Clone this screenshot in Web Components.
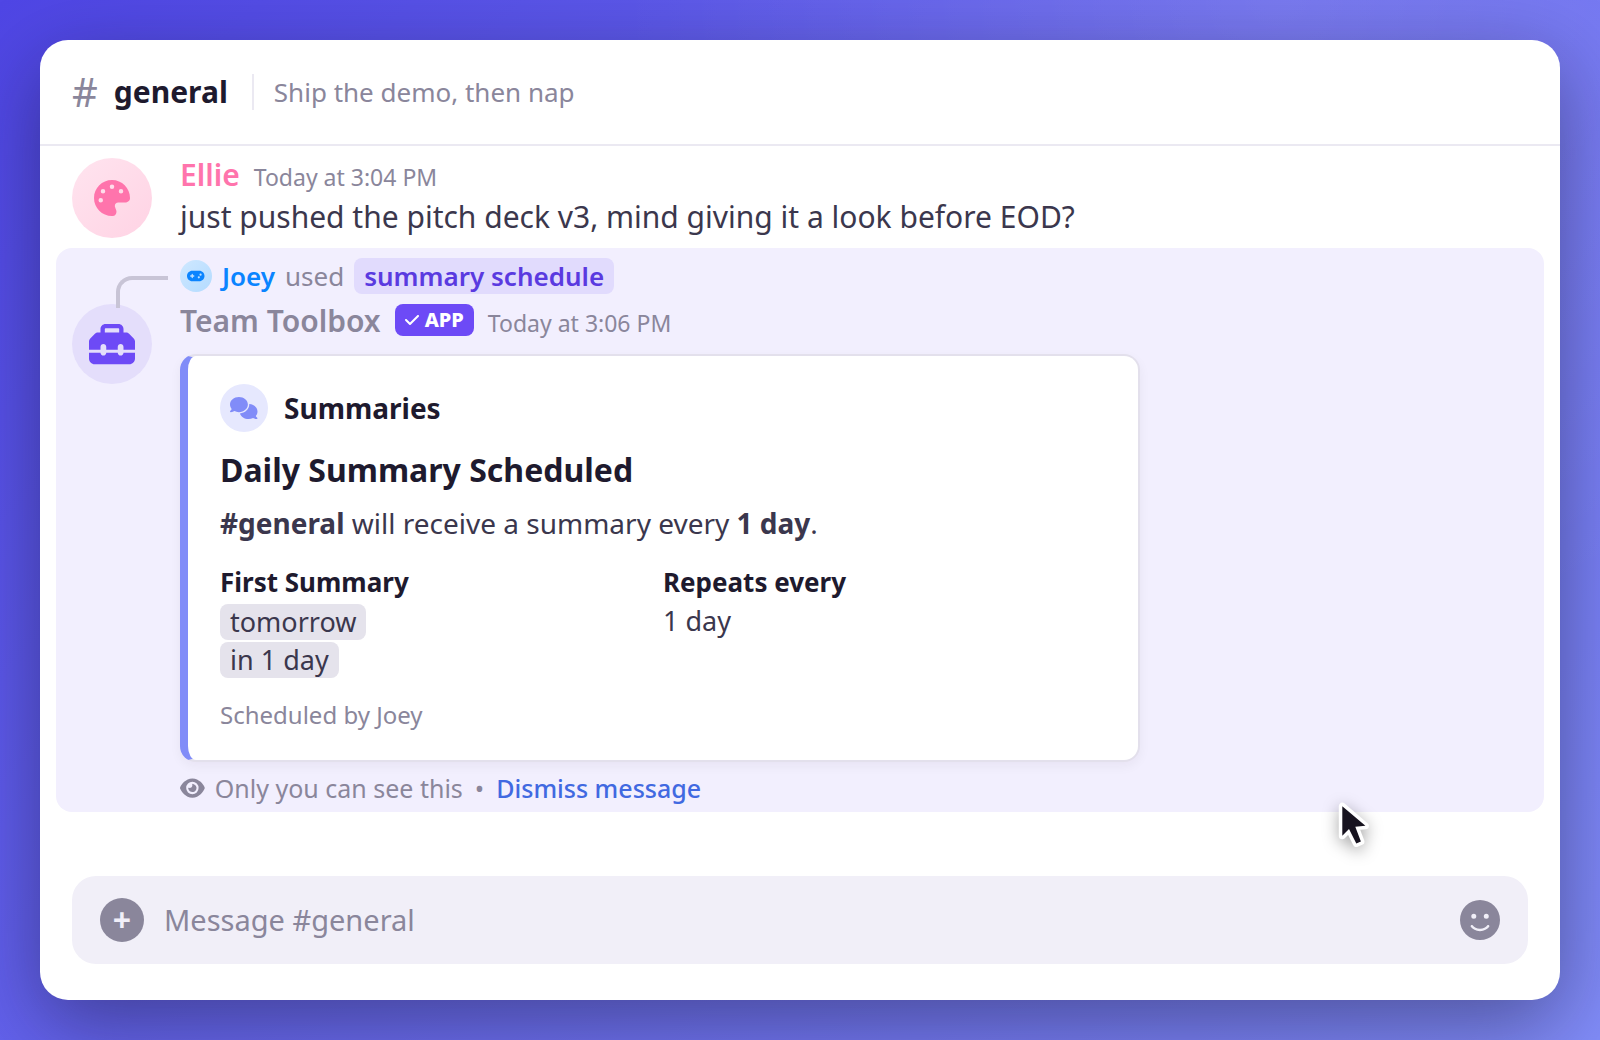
<!DOCTYPE html>
<html lang="en">
<head>
<meta charset="UTF-8">
<meta name="viewport" content="width=device-width, initial-scale=1">
<title>#general</title>
<style>
    :root {
        --ink: #1e1a2e;
        --text: #3b374d;
        --muted: #8a869b;
        --line: #ebe9f2;
        --accent: #6d4af6;
    }
    * {
        box-sizing: border-box;
    }
    body {
        margin: 0;
        min-height: 100vh;
        padding: 40px;
        display: flex;
        font-family: "Noto Sans", "Open Sans", sans-serif;
        color: var(--text);
        background:
            radial-gradient(circle at 80% 0%, rgba(255, 255, 255, 0.12), transparent 40%),
            linear-gradient(135deg, #4f46e5, #818cf8);
    }
</style>
</head>
<body>
    <chat-window>
        <channel-header slot="header" name="general" topic="Ship the demo, then nap"></channel-header>

        <chat-message author="Ellie" time="Today at 3:04 PM" icon="palette" theme="pink">
            <message-text>just pushed the pitch deck v3, mind giving it a look before EOD?</message-text>
        </chat-message>

        <chat-message author="Team Toolbox" time="Today at 3:06 PM" icon="toolbox" theme="app" app highlighted>
            <command-reply slot="reply" user="Joey" command="summary schedule"></command-reply>
            <app-embed icon="comments" category="Summaries" heading="Daily Summary Scheduled">
                <span slot="description"><b>#general</b> will receive a summary every <b>1 day</b>.</span>
                <embed-field label="First Summary">
                    <time-chip>tomorrow</time-chip>
                    <time-chip>in 1 day</time-chip>
                </embed-field>
                <embed-field label="Repeats every">1 day</embed-field>
                <span slot="footer">Scheduled by Joey</span>
            </app-embed>
            <ephemeral-note></ephemeral-note>
        </chat-message>

        <message-composer slot="composer" channel="general"></message-composer>
    </chat-window>
    <mouse-pointer></mouse-pointer>

<script>
const ICONS = {
    palette: ['0 0 512 512', 'M512 256c0 .9 0 1.8 0 2.7c-.4 36.5-33.6 61.3-70.1 61.3L344 320c-26.5 0-48 21.5-48 48c0 3.4 .4 6.7 1 9.9c2.1 10.2 6.5 20 10.8 29.9c6.1 13.8 12.1 27.5 12.1 42c0 31.8-21.6 60.7-53.4 62c-3.5 .1-7 .2-10.6 .2C114.6 512 0 397.4 0 256S114.6 0 256 0S512 114.6 512 256zM128 288a32 32 0 1 0 -64 0 32 32 0 1 0 64 0zm0-96a32 32 0 1 0 0-64 32 32 0 1 0 0 64zM288 96a32 32 0 1 0 -64 0 32 32 0 1 0 64 0zm96 96a32 32 0 1 0 0-64 32 32 0 1 0 0 64z'],
    toolbox: ['0 0 512 512', 'M176 88l0 40 160 0 0-40c0-4.4-3.6-8-8-8L184 80c-4.4 0-8 3.6-8 8zm-48 40l0-40c0-30.9 25.1-56 56-56l144 0c30.9 0 56 25.1 56 56l0 40 28.1 0c12.7 0 24.9 5.1 33.9 14.1l51.9 51.9c9 9 14.1 21.2 14.1 33.9l0 92.1-128 0 0-32c0-17.7-14.3-32-32-32s-32 14.3-32 32l0 32-128 0 0-32c0-17.7-14.3-32-32-32s-32 14.3-32 32l0 32L0 320l0-92.1c0-12.7 5.1-24.9 14.1-33.9l51.9-51.9c9-9 21.2-14.1 33.9-14.1l28.1 0zM0 416l0-64 128 0c0 17.7 14.3 32 32 32s32-14.3 32-32l128 0c0 17.7 14.3 32 32 32s32-14.3 32-32l128 0 0 64c0 35.3-28.7 64-64 64L64 480c-35.3 0-64-28.7-64-64z'],
    gamepad: ['0 0 640 512', 'M192 64C86 64 0 150 0 256S86 448 192 448l256 0c106 0 192-86 192-192s-86-192-192-192L192 64zM496 168a40 40 0 1 1 0 80 40 40 0 1 1 0-80zM392 304a40 40 0 1 1 80 0 40 40 0 1 1 -80 0zM168 200c0-13.3 10.7-24 24-24s24 10.7 24 24l0 32 32 0c13.3 0 24 10.7 24 24s-10.7 24-24 24l-32 0 0 32c0 13.3-10.7 24-24 24s-24-10.7-24-24l0-32-32 0c-13.3 0-24-10.7-24-24s10.7-24 24-24l32 0 0-32z'],
    comments: ['0 0 640 512', 'M208 352c114.9 0 208-78.8 208-176S322.9 0 208 0S0 78.8 0 176c0 38.6 14.7 74.3 39.6 103.4c-3.5 9.4-8.7 17.7-14.2 24.7c-4.8 6.2-9.7 11-13.3 14.3c-1.8 1.6-3.3 2.9-4.3 3.7c-.5 .4-.9 .7-1.1 .8l-.2 .2C1 327.2-1.4 334.4 .8 340.9S9.1 352 16 352c21.8 0 43.8-5.6 62.1-12.5c9.2-3.5 17.8-7.4 25.2-11.4C134.1 343.3 169.8 352 208 352zM448 176c0 112.3-99.1 196.9-216.5 207C255.8 457.4 336.4 512 432 512c38.2 0 73.9-8.7 104.7-23.9c7.5 4 16 7.9 25.2 11.4c18.3 6.9 40.3 12.5 62.1 12.5c6.9 0 13.1-4.5 15.2-11.1c2.1-6.6-.2-13.8-5.8-17.9l-.2-.2c-.2-.2-.6-.4-1.1-.8c-1-.8-2.5-2-4.3-3.7c-3.6-3.3-8.5-8.1-13.3-14.3c-5.5-7-10.7-15.4-14.2-24.7c24.9-29 39.6-64.7 39.6-103.4c0-92.8-84.9-168.9-192.6-175.5c.4 5.1 .6 10.3 .6 15.5z'],
    eye: ['0 0 576 512', 'M288 32c-80.8 0-145.5 36.8-192.6 80.6C48.6 156 17.3 208 2.5 243.7c-3.3 7.9-3.3 16.7 0 24.6C17.3 304 48.6 356 95.4 399.4C142.5 443.2 207.2 480 288 480s145.5-36.8 192.6-80.6c46.8-43.5 78.1-95.4 93-131.1c3.3-7.9 3.3-16.7 0-24.6c-14.9-35.7-46.2-87.7-93-131.1C433.5 68.8 368.8 32 288 32zM144 256a144 144 0 1 1 288 0 144 144 0 1 1 -288 0zm144-64c0 35.3-28.7 64-64 64c-7.1 0-13.9-1.2-20.3-3.3c-5.5-1.8-11.9 1.6-11.7 7.4c.3 6.9 1.3 13.8 3.2 20.7c13.7 51.2 66.4 81.6 117.6 67.9s81.6-66.4 67.9-117.6c-11.1-41.5-47.8-69.4-88.6-71.1c-5.8-.2-9.2 6.1-7.4 11.7c2.1 6.4 3.3 13.2 3.3 20.3z'],
    check: ['0 0 448 512', 'M438.6 105.4c12.5 12.5 12.5 32.8 0 45.3l-256 256c-12.5 12.5-32.8 12.5-45.3 0l-128-128c-12.5-12.5-12.5-32.8 0-45.3s32.8-12.5 45.3 0L160 338.7 393.4 105.4c12.5-12.5 32.8-12.5 45.3 0z'],
    smile: ['0 0 512 512', 'M256 512A256 256 0 1 0 256 0a256 256 0 1 0 0 512zM164.1 325.5C182 346.2 212.6 368 256 368s74-21.8 91.9-42.5c5.8-6.7 15.9-7.4 22.6-1.6s7.4 15.9 1.6 22.6C349.8 372.1 311.1 400 256 400s-93.8-27.9-116.1-53.5c-5.8-6.7-5.1-16.8 1.6-22.6s16.8-5.1 22.6 1.6zM144.4 208a32 32 0 1 1 64 0 32 32 0 1 1 -64 0zm192-32a32 32 0 1 1 0 64 32 32 0 1 1 0-64z']
};

// height follows font-size, width follows the viewBox
class UiIcon extends HTMLElement {
    constructor() {
        super();
        this.attachShadow({ mode: 'open' });
    }

    connectedCallback() {
        const [box, path] = ICONS[this.getAttribute('name')];
        this.shadowRoot.innerHTML = `
            <style>
                :host {
                    display: inline-flex;
                    flex: none;
                }
                svg {
                    display: block;
                    height: 1em;
                    fill: currentColor;
                }
            </style>
            <svg viewBox="${box}" aria-hidden="true"><path d="${path}"/></svg>
        `;
    }
}

class ChatWindow extends HTMLElement {
    constructor() {
        super();
        this.attachShadow({ mode: 'open' });
    }

    connectedCallback() {
        this.shadowRoot.innerHTML = `
            <style>
                :host {
                    flex: 1;
                    min-width: 0;
                    display: flex;
                    flex-direction: column;
                    background: #fff;
                    border-radius: 28px;
                    box-shadow: 0 24px 80px rgba(15, 12, 30, 0.42);
                }
                main {
                    flex: 1;
                    display: flex;
                    flex-direction: column;
                    gap: 2px;
                    padding: 4px 16px;
                }
            </style>
            <slot name="header"></slot>
            <main><slot></slot></main>
            <slot name="composer"></slot>
        `;
    }
}

class ChannelHeader extends HTMLElement {
    constructor() {
        super();
        this.attachShadow({ mode: 'open' });
    }

    connectedCallback() {
        this.shadowRoot.innerHTML = `
            <style>
                :host {
                    display: block;
                    border-bottom: 2px solid var(--line);
                }
                header {
                    display: flex;
                    align-items: center;
                    min-height: 104px;
                    padding: 0 32px;
                    box-sizing: border-box;
                }
                .hash {
                    font-size: 40px;
                    line-height: 48px;
                    margin-right: 16px;
                    color: var(--muted);
                }
                h1 {
                    margin: 0;
                    font-size: 30px;
                    line-height: 42px;
                    font-weight: 700;
                    color: var(--ink);
                }
                .topic {
                    margin: 0 0 0 24px;
                    padding-left: 20px;
                    border-left: 2px solid var(--line);
                    font-size: 26px;
                    line-height: 36px;
                    color: var(--muted);
                }
            </style>
            <header>
                <span class="hash">#</span>
                <h1>${this.getAttribute('name')}</h1>
                <p class="topic">${this.getAttribute('topic')}</p>
            </header>
        `;
    }
}

class ChatMessage extends HTMLElement {
    constructor() {
        super();
        this.attachShadow({ mode: 'open' });
    }

    connectedCallback() {
        const badge = this.hasAttribute('app')
            ? '<span class="badge"><ui-icon name="check"></ui-icon>APP</span>'
            : '';
        this.shadowRoot.innerHTML = `
            <style>
                :host {
                    display: block;
                    padding: 8px 16px;
                    border-radius: 16px;
                }
                :host([highlighted]) {
                    background: #f2effe;
                }
                article {
                    display: grid;
                    grid-template-columns: 80px minmax(0, 1fr);
                    column-gap: 28px;
                }
                .reply {
                    grid-column: 1 / -1;
                }
                .avatar {
                    display: flex;
                    align-items: center;
                    justify-content: center;
                    width: 80px;
                    height: 80px;
                    border-radius: 50%;
                }
                :host([theme="pink"]) .avatar {
                    font-size: 36px;
                    color: #ff74ac;
                    background: linear-gradient(135deg, #ffe4ef, #ffd3e4);
                }
                :host([theme="app"]) .avatar {
                    font-size: 46px;
                    color: var(--accent);
                    background: #e4defb;
                }
                .meta {
                    display: flex;
                    align-items: baseline;
                    height: 34px;
                    line-height: 34px;
                }
                .name {
                    font-size: 30px;
                    font-weight: 600;
                    color: var(--muted);
                }
                :host([theme="pink"]) .name {
                    color: #ff74ac;
                }
                .badge {
                    align-self: flex-start;
                    display: inline-flex;
                    align-items: center;
                    gap: 6px;
                    margin-left: 14px;
                    padding: 0 10px;
                    border-radius: 8px;
                    font-size: 20px;
                    line-height: 32px;
                    font-weight: 800;
                    color: #fff;
                    background: var(--accent);
                }
                .badge ui-icon {
                    font-size: 16px;
                }
                time {
                    margin-left: 14px;
                    font-size: 23px;
                    color: var(--muted);
                }
            </style>
            <article>
                <div class="reply"><slot name="reply"></slot></div>
                <div class="avatar"><ui-icon name="${this.getAttribute('icon')}"></ui-icon></div>
                <div class="body">
                    <div class="meta">
                        <span class="name">${this.getAttribute('author')}</span>
                        ${badge}
                        <time>${this.getAttribute('time')}</time>
                    </div>
                    <slot></slot>
                </div>
            </article>
        `;
    }
}

class MessageText extends HTMLElement {
    constructor() {
        super();
        this.attachShadow({ mode: 'open' });
    }

    connectedCallback() {
        this.shadowRoot.innerHTML = `
            <style>
                :host {
                    display: block;
                    margin-top: 4px;
                    font-size: 30px;
                    line-height: 42px;
                }
            </style>
            <slot></slot>
        `;
    }
}

class CommandReply extends HTMLElement {
    constructor() {
        super();
        this.attachShadow({ mode: 'open' });
    }

    connectedCallback() {
        this.shadowRoot.innerHTML = `
            <style>
                :host {
                    display: flex;
                    align-items: center;
                    position: relative;
                    height: 40px;
                    margin-bottom: 8px;
                    padding-left: 108px;
                    font-size: 26px;
                    line-height: 36px;
                    color: var(--muted);
                }
                /* elbow that joins the app avatar to the command line */
                .spine {
                    position: absolute;
                    left: 44px;
                    top: 20px;
                    width: 52px;
                    height: 32px;
                    box-sizing: border-box;
                    border: solid #c8c4d6;
                    border-width: 4px 0 0 4px;
                    border-top-left-radius: 16px;
                }
                .avatar {
                    display: flex;
                    align-items: center;
                    justify-content: center;
                    width: 32px;
                    height: 32px;
                    margin-right: 10px;
                    border-radius: 50%;
                    font-size: 14px;
                    color: #0a84ff;
                    background: linear-gradient(135deg, #cfe8ff, #b3dbff);
                }
                .user {
                    margin-right: 10px;
                    font-weight: 600;
                    color: #0a84ff;
                }
                .command {
                    margin-left: 10px;
                    padding: 0 10px;
                    border-radius: 8px;
                    font-weight: 600;
                    color: #5a3ae0;
                    background: #e1dbfd;
                }
            </style>
            <span class="spine"></span>
            <span class="avatar"><ui-icon name="gamepad"></ui-icon></span>
            <span class="user">${this.getAttribute('user')}</span>
            <span>used</span>
            <span class="command">${this.getAttribute('command')}</span>
        `;
    }
}

class AppEmbed extends HTMLElement {
    constructor() {
        super();
        this.attachShadow({ mode: 'open' });
    }

    connectedCallback() {
        this.shadowRoot.innerHTML = `
            <style>
                :host {
                    display: block;
                    box-sizing: border-box;
                    max-width: 960px;
                    margin-top: 16px;
                    padding: 28px 32px;
                    border: 2px solid #e3e0ec;
                    border-left: 8px solid #818cf8;
                    border-radius: 16px;
                    background: #fff;
                    box-shadow: 0 4px 12px rgba(30, 26, 46, 0.05);
                }
                .category {
                    display: flex;
                    align-items: center;
                    gap: 16px;
                    font-size: 28px;
                    line-height: 40px;
                    font-weight: 700;
                    color: var(--ink);
                }
                .icon {
                    display: flex;
                    align-items: center;
                    justify-content: center;
                    width: 48px;
                    height: 48px;
                    border-radius: 50%;
                    font-size: 22px;
                    color: #818cf8;
                    background: #e6e8fe;
                }
                h2 {
                    margin: 16px 0 0;
                    font-size: 32px;
                    line-height: 44px;
                    font-weight: 700;
                    color: var(--ink);
                }
                p {
                    margin: 10px 0 0;
                    font-size: 28px;
                    line-height: 42px;
                }
                .fields {
                    display: grid;
                    grid-template-columns: 1fr 1fr;
                    margin-top: 20px;
                }
                footer {
                    margin-top: 20px;
                    font-size: 24px;
                    line-height: 34px;
                    color: var(--muted);
                }
            </style>
            <div class="category">
                <span class="icon"><ui-icon name="${this.getAttribute('icon')}"></ui-icon></span>
                ${this.getAttribute('category')}
            </div>
            <h2>${this.getAttribute('heading')}</h2>
            <p><slot name="description"></slot></p>
            <div class="fields"><slot></slot></div>
            <footer><slot name="footer"></slot></footer>
        `;
    }
}

class EmbedField extends HTMLElement {
    constructor() {
        super();
        this.attachShadow({ mode: 'open' });
    }

    connectedCallback() {
        this.shadowRoot.innerHTML = `
            <style>
                :host {
                    display: block;
                    font-size: 27px;
                    line-height: 38px;
                }
                .label {
                    font-size: 26px;
                    line-height: 36px;
                    font-weight: 700;
                    color: var(--ink);
                }
                .value {
                    display: flex;
                    flex-direction: column;
                    align-items: flex-start;
                    margin-top: 2px;
                }
            </style>
            <div class="label">${this.getAttribute('label')}</div>
            <div class="value"><slot></slot></div>
        `;
    }
}

class TimeChip extends HTMLElement {
    constructor() {
        super();
        this.attachShadow({ mode: 'open' });
    }

    connectedCallback() {
        this.shadowRoot.innerHTML = `
            <style>
                :host {
                    display: block;
                    margin-top: 2px;
                    padding: 0 10px;
                    border-radius: 8px;
                    line-height: 36px;
                    background: #e5e3ec;
                }
            </style>
            <slot></slot>
        `;
    }
}

class EphemeralNote extends HTMLElement {
    constructor() {
        super();
        this.attachShadow({ mode: 'open' });
    }

    connectedCallback() {
        this.shadowRoot.innerHTML = `
            <style>
                :host {
                    display: flex;
                    align-items: center;
                    margin-top: 10px;
                    font-size: 25px;
                    line-height: 32px;
                    color: var(--muted);
                }
                ui-icon {
                    margin-right: 10px;
                    font-size: 22px;
                }
                .dot {
                    margin: 0 12px;
                }
                a {
                    font-weight: 500;
                    color: #4169e1;
                    text-decoration: none;
                }
            </style>
            <ui-icon name="eye"></ui-icon>
            <span>Only you can see this</span>
            <span class="dot">•</span>
            <a href="#dismiss">Dismiss message</a>
        `;
    }
}

class MessageComposer extends HTMLElement {
    constructor() {
        super();
        this.attachShadow({ mode: 'open' });
    }

    connectedCallback() {
        const label = `Message #${this.getAttribute('channel')}`;
        this.shadowRoot.innerHTML = `
            <style>
                :host {
                    display: block;
                    padding: 0 32px 36px;
                }
                form {
                    display: flex;
                    align-items: center;
                    min-height: 88px;
                    padding: 0 28px;
                    box-sizing: border-box;
                    border-radius: 24px;
                    background: #f1eff8;
                }
                button {
                    display: flex;
                    align-items: center;
                    justify-content: center;
                    padding: 0;
                    border: 0;
                    border-radius: 50%;
                    font-family: inherit;
                    cursor: pointer;
                }
                .add {
                    width: 44px;
                    height: 44px;
                    font-size: 32px;
                    line-height: 44px;
                    font-weight: 700;
                    color: #f1eff8;
                    background: var(--muted);
                }
                .emoji {
                    font-size: 40px;
                    color: var(--muted);
                    background: none;
                }
                input {
                    flex: 1;
                    min-width: 0;
                    margin: 0 20px;
                    padding: 0;
                    border: 0;
                    outline: 0;
                    font: inherit;
                    font-size: 29px;
                    line-height: 42px;
                    color: var(--text);
                    background: none;
                }
                input::placeholder {
                    color: var(--muted);
                    opacity: 1;
                }
            </style>
            <form>
                <button class="add" type="button" aria-label="Add attachment">+</button>
                <input type="text" placeholder="${label}" aria-label="${label}">
                <button class="emoji" type="button" aria-label="Pick emoji"><ui-icon name="smile"></ui-icon></button>
            </form>
        `;
    }
}

class MousePointer extends HTMLElement {
    constructor() {
        super();
        this.attachShadow({ mode: 'open' });
    }

    connectedCallback() {
        this.shadowRoot.innerHTML = `
            <style>
                :host {
                    position: absolute;
                    left: 1336px;
                    top: 798px;
                    pointer-events: none;
                }
                svg {
                    display: block;
                    overflow: visible;
                    filter: drop-shadow(0 4px 8px rgba(0, 0, 0, 0.35));
                }
                path {
                    fill: #17131f;
                    stroke: #fff;
                    stroke-width: 7;
                    stroke-linejoin: round;
                    paint-order: stroke;
                }
            </style>
            <svg width="36" height="52" viewBox="0 0 36 52" aria-hidden="true">
                <path d="M6.3 8.2V37.7L13 31L20.3 45.5L24.9 43.6L19.3 28.7L29.4 27.8Z"/>
            </svg>
        `;
    }
}

customElements.define('ui-icon', UiIcon);
customElements.define('chat-window', ChatWindow);
customElements.define('channel-header', ChannelHeader);
customElements.define('chat-message', ChatMessage);
customElements.define('message-text', MessageText);
customElements.define('command-reply', CommandReply);
customElements.define('app-embed', AppEmbed);
customElements.define('embed-field', EmbedField);
customElements.define('time-chip', TimeChip);
customElements.define('ephemeral-note', EphemeralNote);
customElements.define('message-composer', MessageComposer);
customElements.define('mouse-pointer', MousePointer);
</script>
</body>
</html>
